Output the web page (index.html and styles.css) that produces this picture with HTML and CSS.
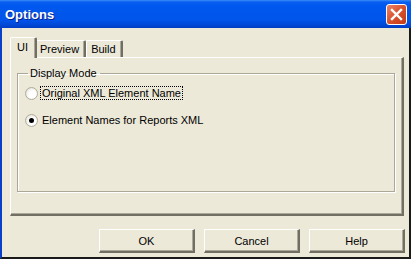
FILE: index.html
```html
<!DOCTYPE html>
<html lang="en">
<head>
  <meta charset="UTF-8" />
  <title>Options</title>
  <link rel="stylesheet" href="styles.css">
</head>
<body>
  <div class="window">
    <div class="titlebar">
      <span class="title">Options</span>
      <div class="close-btn">
        <svg width="13" height="13" viewBox="0 0 13 13">
          <path d="M2 2 L11 11 M11 2 L2 11" stroke="#fff" stroke-width="2.4" stroke-linecap="square" />
        </svg>
      </div>
    </div>

    <div class="client">
      <div class="tabs">
        <div class="tab selected">UI</div>
        <div class="tab">Preview</div>
        <div class="tab">Build</div>
      </div>

      <div class="tab-panel">
        <fieldset class="group">
          <legend>Display Mode</legend>
          <div class="option">
            <span class="radio"></span>
            <span class="label focused">Original XML Element Name</span>
          </div>
          <div class="option">
            <span class="radio checked"></span>
            <span class="label">Element Names for Reports XML</span>
          </div>
        </fieldset>
      </div>

      <div class="buttons">
        <button>OK</button>
        <button>Cancel</button>
        <button>Help</button>
      </div>
    </div>
  </div>
</body>
</html>
```

FILE: styles.css
```css
* {
  box-sizing: border-box;
}
body {
  margin: 0;
  padding: 0;
  width: 411px;
  height: 259px;
  overflow: hidden;
  font-family: 'Liberation Sans', Arial, sans-serif;
  font-size: 11px;
  color: #000;
}
.window {
  width: 411px;
  height: 259px;
  display: flex;
  flex-direction: column;
}
.titlebar {
  height: 28px;
  flex: none;
  display: flex;
  align-items: center;
  justify-content: space-between;
  padding: 0 4px 0 5px;
  background: linear-gradient(to bottom, #3a8cf8 0px, #0a5ff0 2px, #0058ee 5px, #0055ea 20px, #0048d6 25px, #003cc0 28px);
}
.title {
  color: #fff;
  font-weight: bold;
  font-size: 13px;
  text-shadow: 1px 1px 0 #0a1e8a;
  margin-top: 1px;
}
.close-btn {
  width: 21px;
  height: 21px;
  border: 1px solid #fff;
  border-radius: 3px;
  background: linear-gradient(to bottom right, #e8866a, #d9512c 50%, #c23a17);
  display: flex;
  align-items: center;
  justify-content: center;
}
.close-btn svg {
  display: block;
}
.client {
  flex: 1;
  background: #ece9d8;
  border-left: 2px solid #0840c8;
  border-right: 2px solid #1a1a1a;
  border-bottom: 2px solid #1a1a1a;
  padding: 9px 0 0 8px;
}
.tabs {
  display: flex;
  align-items: flex-end;
  height: 20px;
}
.tab {
  height: 17px;
  line-height: 16px;
  padding: 0 5px 0 4px;
  background: #ece9d8;
  border: 1px solid #fff;
  border-bottom: none;
  border-right: 2px solid #716f64;
  border-radius: 2px 2px 0 0;
  box-shadow: inset -1px 0 0 #aca899;
}
.tab.selected {
  height: 21px;
  line-height: 19px;
  padding: 0 7px 0 6px;
  position: relative;
  z-index: 1;
  margin-right: -2px;
  margin-bottom: -1px;
}
.tab-panel {
  width: 394px;
  height: 159px;
  border-top: 1px solid #fff;
  border-left: 1px solid #fff;
  border-right: 2px solid #716f64;
  border-bottom: 2px solid #716f64;
  box-shadow: inset -1px -1px 0 #aca899;
  padding: 9px 0 0 6px;
}
.group {
  width: 378px;
  height: 125px;
  margin: 0;
  padding: 0 0 0 7px;
  border: 1px solid #aca899;
  box-shadow: 1px 1px 0 #fff, inset 1px 1px 0 #fff;
}
.group legend {
  padding: 0 3px 0 2px;
  margin-left: 3px;
  line-height: 13px;
}
.option {
  display: flex;
  align-items: center;
  height: 14px;
  margin-top: 6px;
}
.option + .option {
  margin-top: 13px;
}
.radio {
  width: 13px;
  height: 13px;
  border-radius: 50%;
  border: 1px solid #b0ac9c;
  background: radial-gradient(circle at 60% 60%, #fff 40%, #e4e2d8 80%);
  margin-right: 2px;
  display: flex;
  align-items: center;
  justify-content: center;
}
.radio.checked::after {
  content: '';
  width: 5px;
  height: 5px;
  border-radius: 50%;
  background: #000;
}
.label {
  padding: 0 1px;
  border: 1px solid transparent;
  line-height: 12px;
}
.label.focused {
  border: 1px dotted #000;
}
.buttons {
  display: flex;
  gap: 9px;
  margin: 13px 0 0 89px;
}
button {
  width: 96px;
  height: 24px;
  font-family: 'Liberation Sans', Arial, sans-serif;
  font-size: 11px;
  color: #000;
  background: #ece9d8;
  border-top: 1px solid #fff;
  border-left: 1px solid #fff;
  border-right: 2px solid #716f64;
  border-bottom: 2px solid #716f64;
  box-shadow: inset -1px -1px 0 #aca899;
  padding: 0;
}
```
